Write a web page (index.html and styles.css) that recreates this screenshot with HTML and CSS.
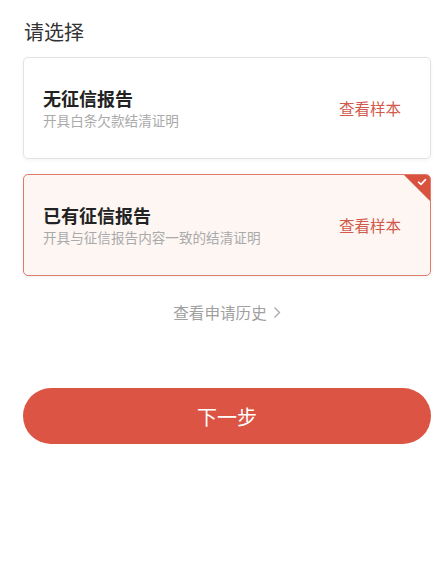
FILE: index.html
```html
<!DOCTYPE html>
<html lang="zh">
<head>
<meta charset="utf-8">
<link rel="stylesheet" href="styles.css">
</head>
<body>
<div class="page">
  <div class="heading">请选择</div>
  <div class="options">
    <div class="card">
      <div class="info">
        <div class="title">无征信报告</div>
        <div class="desc">开具白条欠款结清证明</div>
      </div>
      <div class="sample">查看样本</div>
    </div>
    <div class="card selected">
      <div class="info">
        <div class="title">已有征信报告</div>
        <div class="desc">开具与征信报告内容一致的结清证明</div>
      </div>
      <div class="sample">查看样本</div>
      <div class="corner">
        <svg class="check" width="10" height="8" viewBox="0 0 10 8"><path d="M1.5 4.2 L4 6.4 L8.5 1.6" fill="none" stroke="#fff" stroke-width="1.6" stroke-linecap="round" stroke-linejoin="round"/></svg>
      </div>
    </div>
  </div>
  <div class="history">查看申请历史<svg class="chev" width="8" height="13" viewBox="0 0 8 13"><path d="M1.5 1.5 L6.5 6.5 L1.5 11.5" fill="none" stroke="#a8a8a8" stroke-width="1.3"/></svg></div>
  <button class="next">下一步</button>
</div>
</body>
</html>
```
FILE: styles.css
```css
html, body {
  margin: 0;
  padding: 0;
  background: #fff;
}
body {
  font-family: "Noto Sans CJK SC", "Noto Sans", sans-serif;
  color: #333;
}
.page {
  padding: 0 9px 0 23px;
  display: flex;
  flex-direction: column;
}
.heading {
  font-size: 20px;
  line-height: 28px;
  margin-top: 18px;
  padding-left: 1px;
  color: #333;
}
.options {
  margin-top: 11px;
  display: flex;
  flex-direction: column;
  gap: 15px;
}
.card {
  position: relative;
  height: 100px;
  border: 1px solid #e3e3e3;
  border-radius: 5px;
  box-shadow: 0 1px 4px rgba(0,0,0,0.05);
  background: #fff;
  display: flex;
  align-items: center;
  justify-content: space-between;
  padding: 0 29px 0 19px;
  overflow: hidden;
}
.card.selected {
  border-color: #df7a6c;
  background: #fdf6f3;
}
.info {
  display: flex;
  flex-direction: column;
  gap: 1px;
  margin-top: -2px;
}
.title {
  font-size: 18px;
  font-weight: bold;
  line-height: 24px;
  color: #222;
}
.desc {
  font-size: 13.6px;
  line-height: 18px;
  color: #aaa;
}
.sample {
  font-size: 15.5px;
  color: #d25a4c;
}
.corner {
  position: absolute;
  top: 0;
  right: 0;
  width: 0;
  height: 0;
  border-top: 26px solid #d9513f;
  border-left: 26px solid transparent;
}
.check {
  position: absolute;
  top: -23px;
  right: 3px;
}
.history {
  margin-top: 26px;
  align-self: center;
  font-size: 15.6px;
  line-height: 20px;
  color: #a0a0a0;
  display: flex;
  align-items: center;
  gap: 6px;
}
.next {
  margin-top: 66px;
  height: 56px;
  border: none;
  border-radius: 28px;
  background: #dc5443;
  color: #fff;
  font-family: "Noto Sans CJK SC", sans-serif;
  font-size: 20px;
}
```
